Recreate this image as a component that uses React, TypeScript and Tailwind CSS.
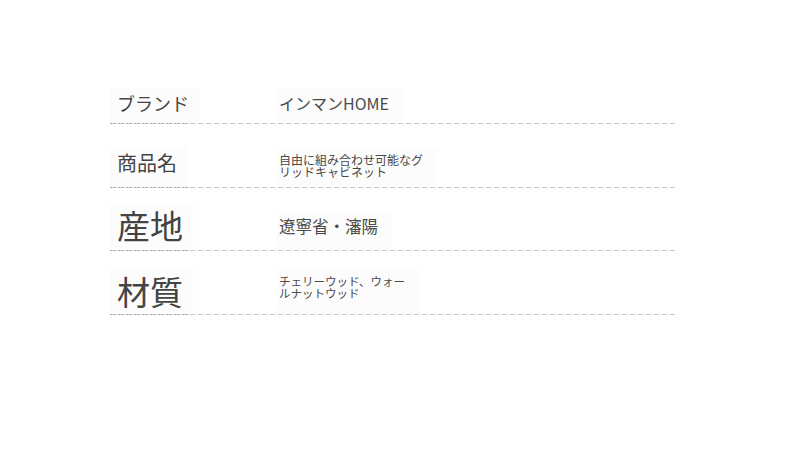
import React from "react"

const font = { fontFamily: '"Noto Sans CJK JP", "Noto Sans", sans-serif' }

type Row = {
  label: string
  labelClass: string
  value: React.ReactNode
  valueClass: string
}

const rows: Row[] = [
  {
    label: "ブランド",
    labelClass: "text-[18px] pb-[11px]",
    value: "インマンHOME",
    valueClass: "text-[16px] pb-[12px]",
  },
  {
    label: "商品名",
    labelClass: "text-[20px] pb-[14px]",
    value: (
      <>
        自由に組み合わせ可能なグ
        <br />
        リッドキャビネット
      </>
    ),
    valueClass: "text-[12px] leading-[15px] pb-[9px]",
  },
  {
    label: "産地",
    labelClass: "text-[33px] pb-[8px]",
    value: "遼寧省・瀋陽",
    valueClass: "text-[16.5px] pb-[16px]",
  },
  {
    label: "材質",
    labelClass: "text-[33px] pb-[6px]",
    value: (
      <>
        チェリーウッド、ウォー
        <br />
        ルナットウッド
      </>
    ),
    valueClass: "text-[11.5px] leading-[13px] pb-[15px]",
  },
]

const Divider = () => (
  <div className="relative h-px w-full bg-[repeating-linear-gradient(to_right,#c6c6c6_0_5px,transparent_5px_8px)]">
    <div className="absolute left-0 top-0 h-px w-[80px] bg-[repeating-linear-gradient(to_right,#a8a8a8_0_2px,transparent_2px_4px)]" />
  </div>
)

export default function App() {
  return (
    <div className="w-[790px] h-[462px] bg-white" style={font}>
      <div className="ml-[110px] w-[568px] pt-[60px]">
        {rows.map((r, i) => (
          <div key={i}>
            <div className={`flex items-end ${i === 2 ? "h-[62px]" : "h-[63px]"}`}>
              <div className="w-[167px] shrink-0">
                <div className={`inline-block bg-[#fcfcfc] pl-[7px] pr-[10px] pt-[6px] leading-none text-[#444] ${r.labelClass}`}>
                  {r.label}
                </div>
              </div>
              <div className={`inline-block bg-[#fcfcfc] pl-[2px] pr-[14px] pt-[6px] leading-none text-[#4a4a4a] ${r.valueClass}`}>
                {r.value}
              </div>
            </div>
            <Divider />
          </div>
        ))}
      </div>
    </div>
  )
}
